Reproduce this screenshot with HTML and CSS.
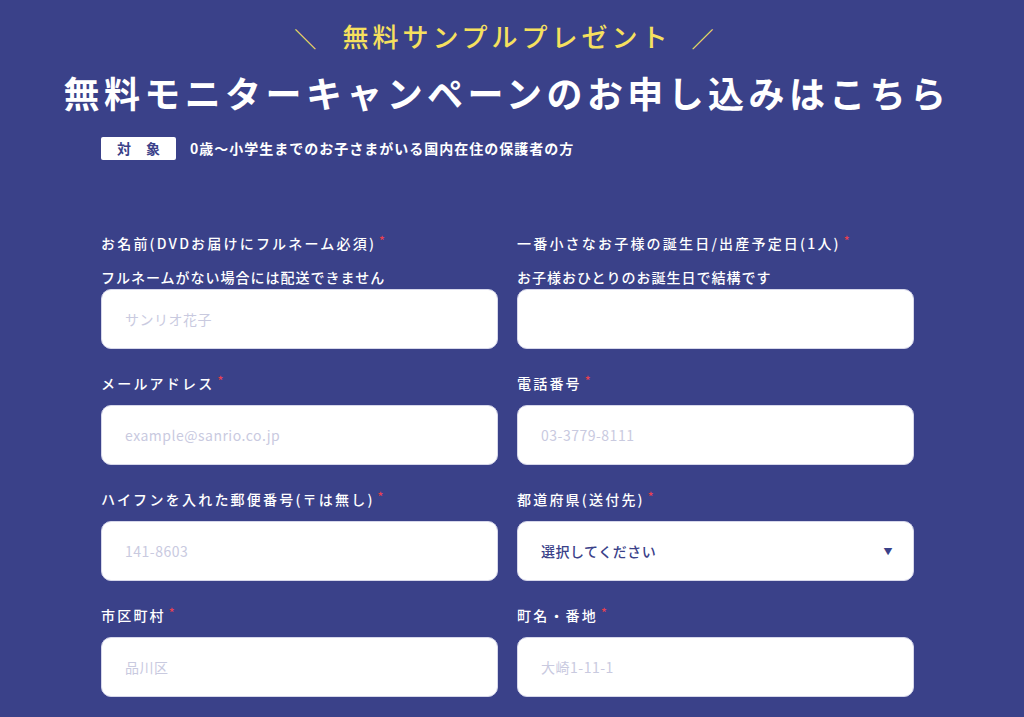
FILE: index.html
```html
<!DOCTYPE html>
<html lang="ja">
<head>
    <meta charset="UTF-8">
    <meta name="viewport" content="width=device-width, initial-scale=1.0">
    <title>無料モニターキャンペーン</title>
    <link rel="stylesheet" href="styles.css">
</head>
<body>

    <section class="entry">
        <header class="entry-head">
            <p class="lead"><span class="slash">＼</span>無料サンプルプレゼント<span class="slash">／</span></p>
            <h1>無料モニターキャンペーンのお申し込みはこちら</h1>
            <p class="target"><span class="badge"><span>対</span><span>象</span></span>0歳～小学生までのお子さまがいる国内在住の保護者の方</p>
        </header>

        <form class="form">
            <div class="field">
                <label>お名前(DVDお届けにフルネーム必須)<span class="req">*</span></label>
                <p class="note">フルネームがない場合には配送できません</p>
                <input type="text" placeholder="サンリオ花子">
            </div>
            <div class="field">
                <label>一番小さなお子様の誕生日/出産予定日(1人)<span class="req">*</span></label>
                <p class="note">お子様おひとりのお誕生日で結構です</p>
                <input type="text">
            </div>
            <div class="field">
                <label>メールアドレス<span class="req">*</span></label>
                <input type="text" placeholder="example@sanrio.co.jp">
            </div>
            <div class="field">
                <label>電話番号<span class="req">*</span></label>
                <input type="text" placeholder="03-3779-8111">
            </div>
            <div class="field">
                <label>ハイフンを入れた郵便番号(〒は無し)<span class="req">*</span></label>
                <input type="text" placeholder="141-8603">
            </div>
            <div class="field">
                <label>都道府県(送付先)<span class="req">*</span></label>
                <div class="select">選択してください<span class="arrow">▼</span></div>
            </div>
            <div class="field">
                <label>市区町村<span class="req">*</span></label>
                <input type="text" placeholder="品川区">
            </div>
            <div class="field">
                <label>町名・番地<span class="req">*</span></label>
                <input type="text" placeholder="大崎1-11-1">
            </div>
        </form>
    </section>

</body>
</html>
```

FILE: styles.css
```css
body { margin: 0; background: #3a4189; color: #fff; font-family: "Noto Sans CJK JP", "Noto Sans", sans-serif; }
.entry { padding: 18px 0 20px; }
.entry-head { text-align: center; padding-right: 10px; }
.lead { margin: 0; color: #f6e05e; font-size: 26px; font-weight: 500; letter-spacing: 4px; line-height: 36px; }
.slash { font-size: 22px; margin: 0 22px 0 20px; font-weight: 400; }
h1 { margin: 12px 0 0; font-size: 36px; font-weight: 700; letter-spacing: 4.4px; line-height: 50px; }
.target { display: flex; align-items: center; margin: 19px 0 0 101px; font-size: 14px; font-weight: 700; letter-spacing: 1px; line-height: 24px; }
.badge { display: flex; justify-content: center; gap: 15px; background: #fff; color: #3a4189; border-radius: 2px; width: 75px; height: 23px; line-height: 23px; letter-spacing: 0; margin-right: 14px; }
.form { display: grid; grid-template-columns: 397px 397px; column-gap: 19px; row-gap: 24px; margin: 73px 0 0 101px; }
.field { display: flex; flex-direction: column; }
.field label { font-size: 14px; font-weight: 500; letter-spacing: 2.2px; line-height: 20px; margin-bottom: 12px; }
.field .note { margin: 2px 0 2px; font-size: 14px; font-weight: 500; letter-spacing: 1px; line-height: 20px; }
.req { color: #e8404f; font-size: 12px; vertical-align: top; letter-spacing: 0; margin-left: 3px; line-height: 14px; }
input, .select { box-sizing: border-box; height: 60px; border: 1px solid #d6d7ea; border-radius: 10px; background: #fff; padding: 0 23px; font-family: inherit; font-size: 14px; letter-spacing: 0.5px; color: #3a4189; }
input::placeholder { color: #c9cadf; }
.select { display: flex; align-items: center; justify-content: space-between; font-weight: 500; }
.arrow { font-size: 9px; margin-right: -3px; }
```
